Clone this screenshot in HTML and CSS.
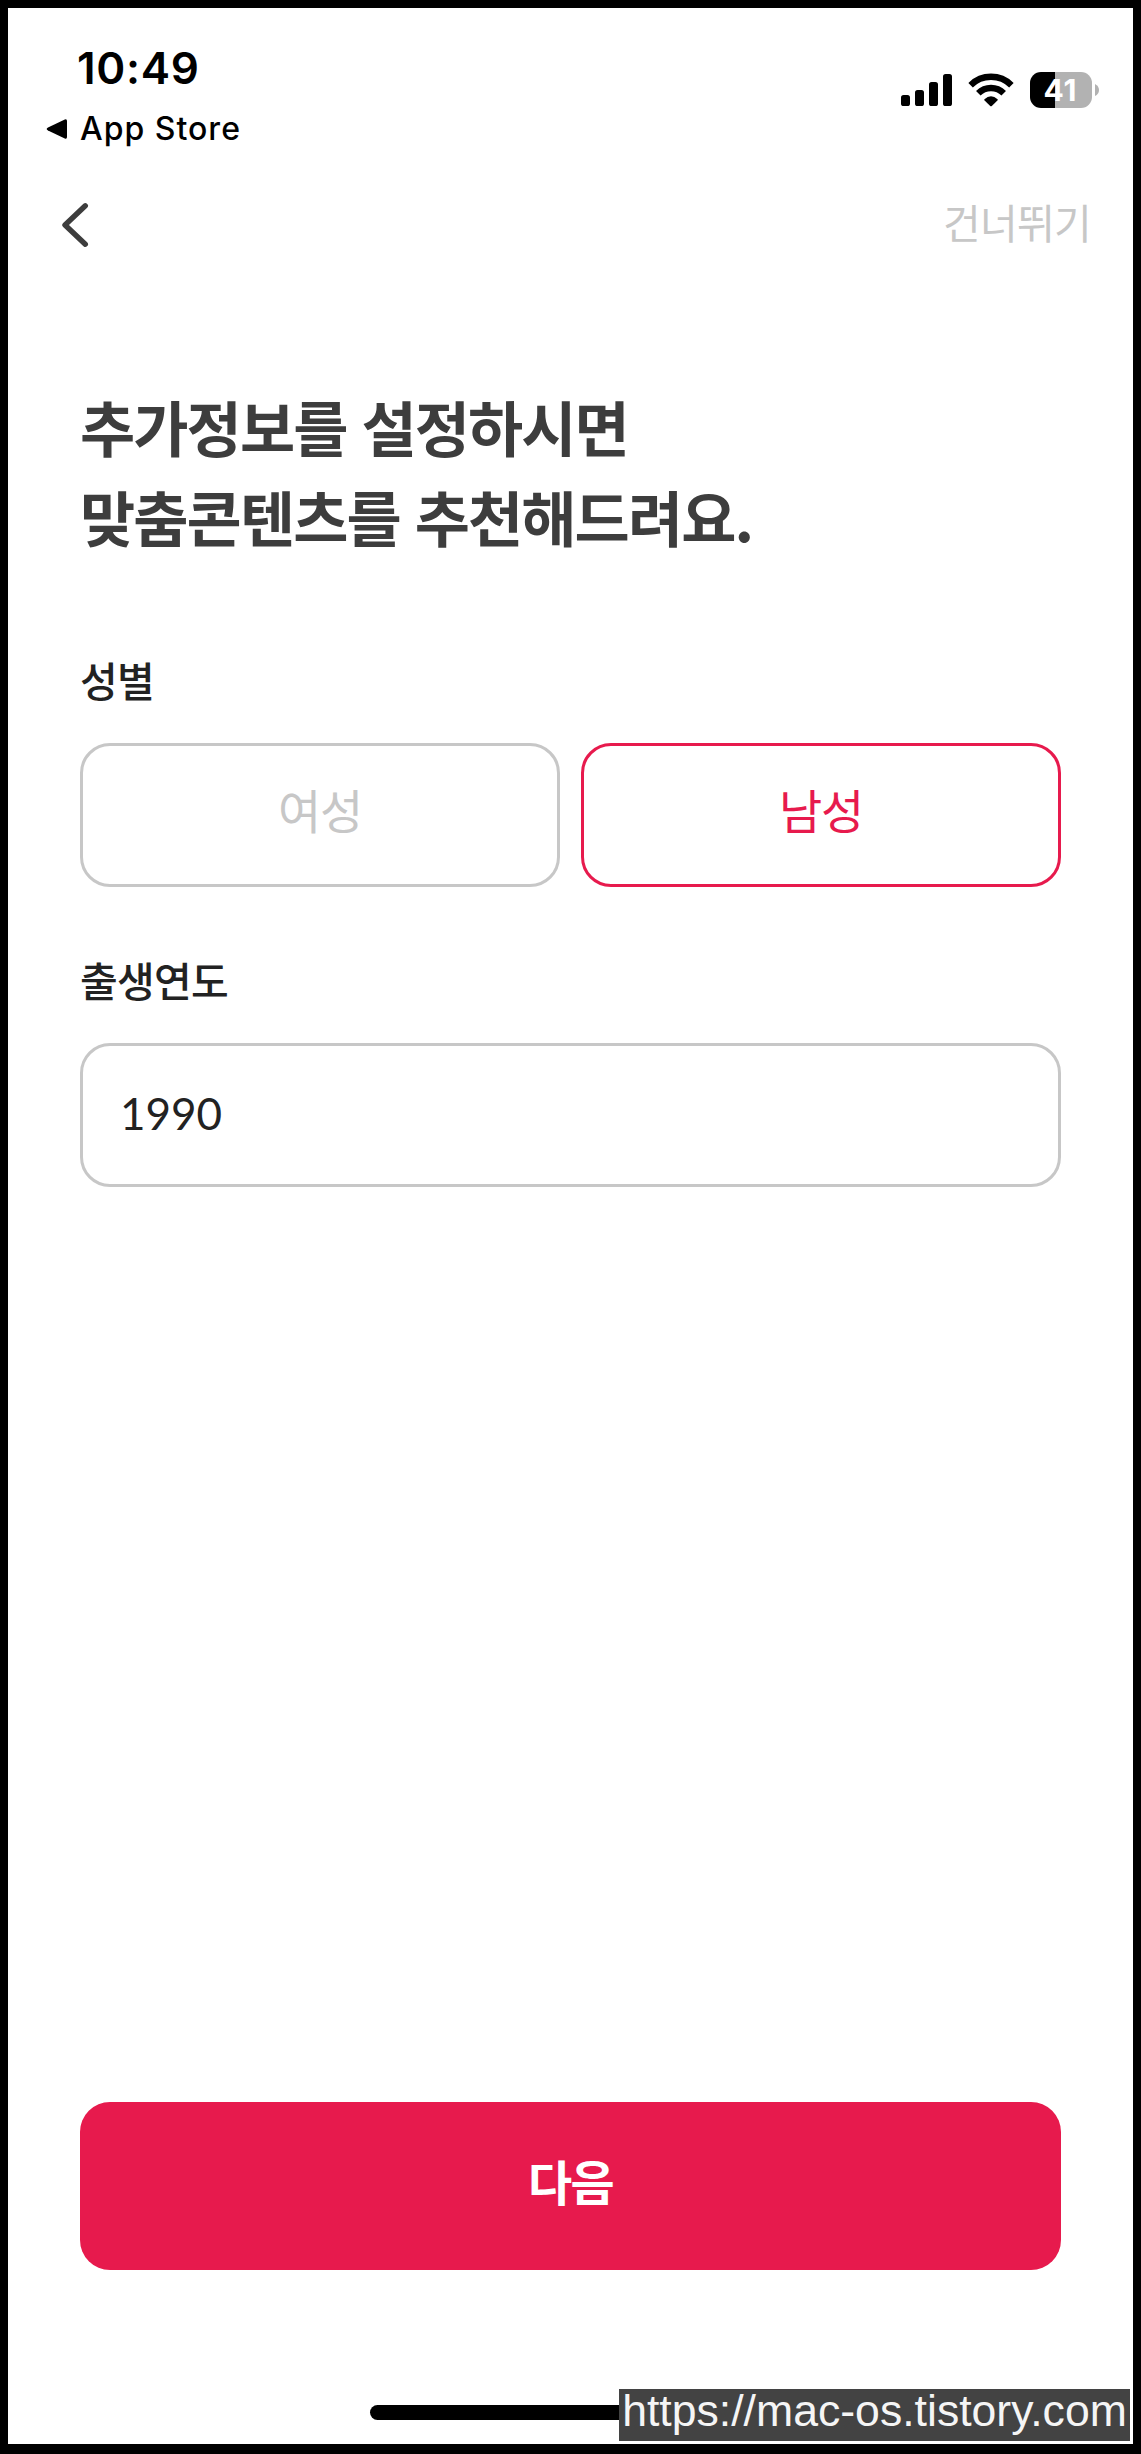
FILE: index.html
```html
<!DOCTYPE html>
<html lang="ko">
<head>
<meta charset="utf-8">
<title>추가정보 설정</title>
<link rel="stylesheet" href="styles.css">
</head>
<body>
<div class="screen">
  <header class="status">
    <div class="status-left">
      <div class="time">10:49</div>
      <div class="back-app">
        <svg class="back-arrow" width="22" height="22" viewBox="0 0 22 22"><path d="M2 9.6 18.8 1.4Q21 .6 21 3V19Q21 21.4 18.8 20.6L2 12.4Q-.6 11 2 9.6Z"/></svg>
        <span>App Store</span>
      </div>
    </div>
    <div class="status-icons">
      <svg class="signal" width="51" height="32" viewBox="0 0 51 32"><rect y="21" width="9" height="11" rx="2.6"/><rect x="14" y="16" width="9" height="16" rx="2.6"/><rect x="28" y="8" width="9" height="24" rx="2.6"/><rect x="42" width="9" height="32" rx="2.6"/></svg>
      <svg class="wifi" width="46" height="34" viewBox="0 0 46 34"><g fill="none" stroke="#000" stroke-width="6.4"><path d="M2.6 12.2A29 29 0 0 1 43.4 12.2"/><path d="M10.3 20.2A18 18 0 0 1 35.7 20.2"/></g><path d="M16.4 26.2Q23 20.4 29.6 26.2 30 26.8 29.4 27.4L23.8 32.9Q23 33.6 22.2 32.9L16.6 27.4Q16 26.8 16.4 26.2Z"/></svg>
      <div class="battery"><span>41</span></div>
      <svg class="battery-cap" width="4" height="12" viewBox="0 0 4 12"><path fill="#b2b2b2" d="M0 0Q4 2 4 6T0 12Z"/></svg>
    </div>
  </header>
  <nav class="nav">
    <svg class="chevron" width="28" height="46" viewBox="0 0 28 46"><path d="M24.3 3.8 4 23 24.3 42.2" fill="none" stroke="#3d3d3d" stroke-width="5.4" stroke-linecap="round" stroke-linejoin="round"/></svg>
    <span class="skip">건너뛰기</span>
  </nav>
  <main class="content">
    <h1 class="title">추가정보를 설정하시면<br>맞춤콘텐츠를 추천해드려요.</h1>
    <div class="label">성별</div>
    <div class="choices">
      <div class="choice">여성</div>
      <div class="choice selected">남성</div>
    </div>
    <div class="label label-year">출생연도</div>
    <div class="field">1990</div>
  </main>
  <div class="next">다음</div>
  <div class="home-bar"></div>
  <div class="watermark">https://mac-os.tistory.com</div>
</div>
</body>
</html>
```
FILE: styles.css
```css
* { box-sizing: border-box; }
body { margin: 0; background: #fff; }
.screen {
  position: relative;
  display: flex;
  flex-direction: column;
  width: 1141px;
  height: 2454px;
  border: 8px solid #000;
  border-bottom-width: 10px;
  background: #fff;
  font-family: "Noto Sans CJK KR", sans-serif;
  white-space: nowrap;
}
.status {
  display: flex;
  justify-content: space-between;
  height: 152px;
  padding: 33px 34px 0 38px;
  font-family: Inter, sans-serif;
  color: #000;
}
.time {
  padding-left: 31px;
  font-size: 44px;
  font-weight: 600;
  line-height: 54px;
  letter-spacing: 0.7px;
}
.back-app {
  display: flex;
  align-items: center;
  gap: 12px;
  margin-top: 14px;
  font-size: 32px;
  font-weight: 500;
  line-height: 40px;
  letter-spacing: 1px;
}
.status-icons { display: flex; align-items: flex-start; }
.signal { margin-top: 33px; }
.wifi { margin: 32px 16px 0; }
.battery {
  width: 62px;
  height: 36px;
  margin-top: 31px;
  border-radius: 11px;
  background: linear-gradient(90deg, #000 25px, #b2b2b2 25px);
  color: #fff;
  font-size: 30px;
  font-weight: 700;
  line-height: 36px;
  letter-spacing: 1px;
  padding-right: 1px;
  text-align: center;
}
.battery-cap { margin: 43px 0 0 3px; }
.nav {
  display: flex;
  align-items: center;
  justify-content: space-between;
  height: 130px;
  padding: 0 42px 0 53px;
}
.skip {
  margin-top: -9px;
  color: #c7c7c7;
  font-size: 41px;
  font-weight: 400;
  line-height: 60px;
  letter-spacing: -0.7px;
}
.content { padding: 91px 72px 0; }
.title {
  margin: 0 0 88px;
  color: #3d3d3d;
  font-size: 60px;
  font-weight: 700;
  line-height: 90px;
  letter-spacing: -1.9px;
}
.label {
  color: #222;
  font-size: 41px;
  font-weight: 500;
  line-height: 60px;
  letter-spacing: -0.7px;
}
.label-year { margin-top: 62px; }
.choices {
  display: grid;
  grid-template-columns: 1fr 1fr;
  gap: 21px;
  margin-top: 34px;
}
.choice, .field {
  display: flex;
  align-items: center;
  height: 144px;
  border: 3px solid #c7c7c7;
  border-radius: 30px;
}
.choice {
  justify-content: center;
  padding-bottom: 14px;
  color: #c7c7c7;
  font-size: 47px;
  font-weight: 400;
  letter-spacing: -1.3px;
}
.choice.selected { border-color: #e71a4d; color: #e71a4d; }
.field {
  margin-top: 34px;
  padding: 0 37px 5px;
  color: #222;
  font-family: Lato, sans-serif;
  font-size: 44px;
}
.next {
  display: flex;
  align-items: center;
  justify-content: center;
  height: 168px;
  margin: auto 72px 135px;
  padding-bottom: 13px;
  border-radius: 30px;
  background: #e71a4d;
  color: #fff;
  font-size: 48px;
  font-weight: 700;
  letter-spacing: -1.6px;
}
.home-bar {
  width: 401px;
  height: 15px;
  margin: 0 auto 24px;
  border-radius: 8px;
  background: #000;
}
.watermark {
  position: absolute;
  right: 3px;
  bottom: 3px;
  width: 511px;
  height: 52px;
  background: #434343;
  color: #f5f5f5;
  font-family: "Liberation Sans", Arial, sans-serif;
  font-size: 44.6px;
  line-height: 44px;
  text-align: center;
}
```
